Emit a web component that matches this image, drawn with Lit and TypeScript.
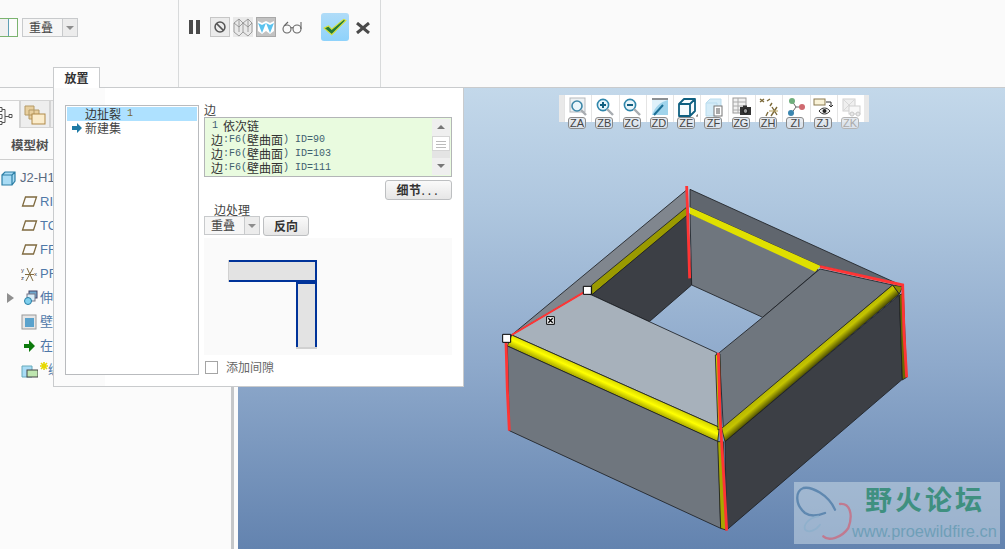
import { css, html, LitElement, svg, unsafeCSS } from "lit";
import { customElement } from "lit/decorators.js";

const CJK = unsafeCSS(`"Noto Sans CJK SC", "Liberation Sans", sans-serif`);

const viewIcons = [
  {
    label: "ZA",
    icon: svg`<rect x="2" y="1" width="15" height="14" fill="#eef2f4" stroke="#b5b9bd"/><circle cx="9" cy="9" r="5" fill="#eaf6fb" stroke="#3d87a8" stroke-width="1.6"/><path d="M13 13l5 5" stroke="#a8acb0" stroke-width="2.4"/>`,
  },
  {
    label: "ZB",
    icon: svg`<circle cx="8" cy="8" r="5.6" fill="#eaf6fb" stroke="#2f86ab" stroke-width="1.6"/><path d="M5 8h6M8 5v6" stroke="#135f80" stroke-width="2"/><path d="M12 12l6 6" stroke="#a8acb0" stroke-width="2.4"/>`,
  },
  {
    label: "ZC",
    icon: svg`<circle cx="8" cy="8" r="5.6" fill="#eaf6fb" stroke="#2f86ab" stroke-width="1.6"/><path d="M5 8h6" stroke="#135f80" stroke-width="2"/><path d="M12 12l6 6" stroke="#a8acb0" stroke-width="2.4"/>`,
  },
  {
    label: "ZD",
    icon: svg`<rect x="2" y="1" width="16" height="2" fill="#8b8f93"/><path d="M2 3h16v15H2z" fill="#dff1fa"/><path d="M2 18C5 10 10 5 18 3v15z" fill="#9fd4ec"/><path d="M4 18L13 8" stroke="#1c6f95" stroke-width="2"/>`,
  },
  {
    label: "ZE",
    icon: svg`<path d="M2 7h11v12H2zM2 7l5-5h11v12l-5 5M13 7l5-5" fill="#f7fbfd" stroke="#0f5f80" stroke-width="1.8" stroke-linejoin="round"/><path d="M21 17v2h-2" stroke="#555" fill="none"/>`,
  },
  {
    label: "ZF",
    icon: svg`<path d="M2 6h11v13H2zM2 6l4-4h11v10" fill="#d4ecf8" stroke="#b9dcee"/><rect x="10" y="9" width="8" height="10" fill="#fff" stroke="#777"/><path d="M12 12h4M12 14h4M12 16h4" stroke="#555"/>`,
  },
  {
    label: "ZG",
    icon: svg`<rect x="2" y="1" width="13" height="15" fill="#f1f1f1" stroke="#999"/><path d="M2 5h13M2 9h13M2 13h13M7 1v15" stroke="#aaa"/><rect x="9" y="10" width="11" height="8" fill="#333"/><rect x="12" y="8.5" width="4" height="2" fill="#333"/><circle cx="14.5" cy="14" r="2.4" fill="#999" stroke="#111"/>`,
  },
  {
    label: "ZH",
    icon: svg`<path d="M1 2l4 3M5 2L1 5M8 4l3-2M13 10l5 8M18 10l-6 9M7 19l2-4M13 6l-2 3" stroke="#7c6a3a" stroke-width="1.4" fill="none"/><path d="M10 14h9" stroke="#b7a05a"/>`,
  },
  {
    label: "ZI",
    icon: svg`<path d="M6 4l4 6 6 0M10 10l-5 7" stroke="#666" fill="none"/><circle cx="6" cy="4" r="3" fill="#6fae7d"/><circle cx="16" cy="10" r="3" fill="#cf6a70"/><circle cx="5" cy="16" r="3" fill="#3b86b0"/>`,
  },
  {
    label: "ZJ",
    icon: svg`<rect x="1" y="2" width="11" height="6" fill="#faf3d8" stroke="#8a7a50"/><path d="M13 5h5v5M16 8l2 2 2-2" stroke="#333" fill="none"/><path d="M6 14c3-4 8-4 11 0-3 4-8 4-11 0z" fill="#eee" stroke="#333"/><circle cx="11.5" cy="14" r="2" fill="#222"/>`,
  },
  {
    label: "ZK",
    icon: svg`<g opacity=".45"><rect x="2" y="2" width="12" height="12" fill="#ddd" stroke="#999"/><path d="M3 3l10 10M13 3L3 13" stroke="#aaa"/><rect x="8" y="9" width="11" height="8" fill="#eee" stroke="#999"/><circle cx="11" cy="17" r="2" fill="#ccc" stroke="#888"/><circle cx="17" cy="17" r="2" fill="#ccc" stroke="#888"/></g>`,
    dim: true,
  },
];

const plane = svg`<path d="M4.5 3h11l-3 9h-11z" fill="none" stroke="#7f6a3f" stroke-width="1.3"/>`;

const treeRows = [
  { text: "J2-H1", left: 1, icon: svg`<path d="M1 5h10v10H1zM1 5l3-3h10v9l-3 4M11 5l3-3" fill="#a9dcf5" stroke="#2d7fa6" stroke-width="1.2"/>`, dark: true },
  { text: "RIGHT", left: 21, icon: plane },
  { text: "TOP", left: 21, icon: plane },
  { text: "FRONT", left: 21, icon: plane },
  {
    text: "PRT_CSYS_DEF",
    left: 21,
    icon: svg`<path d="M5 15L12 2M6 2l6 13M4 8.5h9" stroke="#7f6a3f" fill="none"/><text x="0" y="6" font-size="6" fill="#444">y</text><text x="0" y="14" font-size="6" fill="#444">z</text><text x="13" y="10" font-size="6" fill="#444">x</text>`,
  },
  { text: "伸出项", left: 21, icon: svg`<rect x="8" y="1" width="8" height="7" fill="#6fa8cf" stroke="#446"/><rect x="6" y="4" width="8" height="7" fill="#d7edf8" stroke="#778"/><circle cx="7" cy="11" r="3.5" fill="#7fd0ee" stroke="#2a7fa5"/>`, caret: true },
  { text: "壁", left: 21, icon: svg`<rect x="1" y="1" width="14" height="14" fill="#e6e6e6" stroke="#9a9a9a"/><rect x="4" y="4" width="9" height="9" fill="#5aa2cc"/>` },
  { text: "在此插入", left: 21, icon: svg`<path d="M3 6h5V2l6 6-6 6v-4H3z" fill="#0c7a0c"/>` },
  { text: "编辑", left: 21, icon: svg`<path d="M1 4h10v11H1z" fill="#a9dcf5" stroke="#6ab"/><rect x="6" y="8" width="11" height="7" fill="#bfe6b0" stroke="#444"/>`, star: true },
];

const chainLines = ["90", "103", "111"];

@customElement("app-root")
class AppRoot extends LitElement {
  static override styles = css`
    :host {
      display: block;
      width: 1005px;
      height: 549px;
      position: relative;
      overflow: hidden;
      background: #fbfbfb;
      font-family: ${CJK};
      font-size: 12px;
      line-height: 14px;
      color: #333;
    }
    .ascii {
      font-family: "Liberation Mono", monospace;
      font-size: 10px;
      color: #3f5f70;
    }

    /* ribbon */
    .ribbon {
      display: flex;
      height: 87px;
      box-sizing: content-box;
      border-bottom: 1px solid #c9cbcd;
      background: #fafafa;
    }
    .group {
      border-right: 1px solid #d8dadb;
      display: flex;
      align-items: flex-start;
      padding-top: 13px;
      box-sizing: border-box;
    }
    .group.first {
      width: 179px;
      padding-top: 18px;
      gap: 4px;
    }
    .group.second {
      width: 202px;
      padding-left: 10px;
    }
    .stub {
      width: 17px;
      height: 17px;
      border: 1px solid #7bb36f;
      border-left: none;
      background: linear-gradient(90deg, #f0f0f0 8px, #5f9fb5 8px, #5f9fb5 9px, #fbfbfb 9px);
    }
    .combo {
      display: flex;
      box-sizing: border-box;
      height: 19px;
      border: 1px solid #c8cacc;
      background: #f6f6f6;
      color: #444;
    }
    .combo span {
      flex: 1;
      padding-left: 6px;
      line-height: 16px;
    }
    .combo i {
      width: 14px;
      border-left: 1px solid #c8cacc;
      background: #ececec;
      position: relative;
    }
    .combo i::after {
      content: "";
      position: absolute;
      left: 3px;
      top: 7px;
      border: 4px solid transparent;
      border-top: 4px solid #8d8d8d;
      border-bottom: none;
    }
    .ribbon .combo {
      width: 56px;
    }
    .pause {
      display: flex;
      gap: 3px;
      margin: 7px 10px 0 0;
    }
    .pause b {
      width: 4px;
      height: 14px;
      background: #4a4a4a;
    }
    .tool {
      width: 20px;
      height: 20px;
      margin: 4px 3px 0 0;
      box-sizing: border-box;
      display: block;
    }
    .tool.ban {
      border: 1px solid #c6c6c6;
      background: #ebebeb;
    }
    .tool.pressed {
      background: #c2c2c2;
      border: 1px solid #a8a8a8;
    }
    .glasses {
      width: 20px;
      height: 14px;
      margin: 7px 19px 0 3px;
    }
    .ok {
      width: 28px;
      height: 28px;
      border-radius: 3px;
      background: linear-gradient(#b0dcf8, #8ed2fb);
      display: grid;
      place-items: center;
    }
    .cancel {
      width: 14px;
      height: 12px;
      margin: 9px 0 0 7px;
    }

    /* lower area */
    .main {
      display: flex;
      height: 461px;
    }
    .tree-panel {
      width: 231px;
      flex: none;
      padding-top: 12px;
      box-sizing: border-box;
      background: #fbfbfb;
    }
    .splitter {
      width: 3px;
      flex: none;
      background: #c5c7c9;
      margin-right: 4px;
    }
    .tabs {
      display: flex;
      height: 28px;
      align-items: stretch;
    }
    .tab {
      box-sizing: border-box;
      display: grid;
      place-items: center;
      border: 1px solid #d4d4d4;
    }
    .tab.on {
      width: 20px;
      background: #fbfbfb;
      border-width: 1px 1px 0 0;
    }
    .tab.off {
      width: 30px;
      background: #eeeeee;
      border-bottom: 1px solid #d4d4d4;
    }
    .tree-title {
      height: 31px;
      line-height: 33px;
      padding-left: 11px;
      font-weight: 700;
      font-size: 12.5px;
      color: #505050;
      border-bottom: 1px solid #cfcfcf;
    }
    .tree-list {
      padding-top: 6px;
    }
    .row {
      display: flex;
      align-items: center;
      height: 24px;
      position: relative;
      color: #4f78a8;
      font-family: "Liberation Sans", ${CJK};
      font-size: 13px;
      white-space: nowrap;
    }
    .row.dark {
      color: #5a6a80;
    }
    .row svg {
      width: 17px;
      height: 16px;
      flex: none;
      margin-right: 2px;
    }
    .row svg.star {
      width: 8px;
      height: 8px;
      margin: -8px 0 0 0;
    }
    .caret {
      position: absolute;
      left: 7px;
      top: 7px;
      border: 5px solid transparent;
      border-left: 7px solid #8f8f8f;
      border-right: none;
    }

    /* graphics window */
    .viewport {
      flex: 1;
      position: relative;
      overflow: hidden;
      background: linear-gradient(#c3d8ea 0%, #afc7df 25%, #8ea9cb 60%, #6383af 100%);
    }
    .model {
      position: absolute;
      inset: 0;
      width: 100%;
      height: 100%;
    }
    .view-bar {
      position: absolute;
      left: 321px;
      top: 7px;
      display: flex;
      height: 27px;
      padding: 0 5px 0 5px;
      background: #e9e9e9;
    }
    .view-item {
      width: 27.3px;
      background: #fff;
      border-left: 1px solid #e4e4e4;
      box-sizing: border-box;
      position: relative;
      display: flex;
      justify-content: center;
      padding-top: 2px;
    }
    .view-item svg {
      width: 21px;
      height: 21px;
    }
    .chip {
      position: absolute;
      left: 3px;
      top: 22px;
      width: 18px;
      height: 12px;
      box-sizing: border-box;
      border: 1px solid #8b8b8b;
      border-radius: 3px;
      background: rgba(226, 230, 236, 0.85);
      color: #444;
      font: 11px/10px "Liberation Sans", sans-serif;
      text-align: center;
    }
    .chip.dim {
      color: #aaa;
      border-color: #b5b5b5;
    }
    .watermark {
      position: absolute;
      left: 556px;
      top: 394px;
      width: 206px;
      height: 62px;
      background: rgba(205, 220, 232, 0.52);
      display: flex;
    }
    .watermark svg {
      width: 60px;
      height: 62px;
      flex: none;
    }
    .wm-text {
      display: flex;
      flex-direction: column;
      white-space: nowrap;
    }
    .wm-title {
      font-weight: 700;
      font-size: 27px;
      line-height: 30px;
      letter-spacing: 3px;
      color: #3f9080;
      padding: 2px 0 0 11px;
    }
    .wm-url {
      font: 16.4px/18px "Liberation Sans", sans-serif;
      color: #6f9fb8;
      margin-top: 8px;
      margin-left: -2px;
    }

    /* placement panel, floats over tree and window */
    .panel {
      position: absolute;
      left: 53px;
      top: 67px;
    }
    .panel-tab {
      width: 47px;
      height: 21px;
      box-sizing: border-box;
      border: 1px solid #c9cbcd;
      border-bottom: none;
      background: #fff;
      text-align: center;
      font-weight: 700;
      line-height: 20px;
      color: #333;
    }
    .panel-body {
      width: 411px;
      height: 299px;
      box-sizing: border-box;
      border: 1px solid #c9cbcd;
      border-top: none;
      background: linear-gradient(90deg, #fbfbfb 51px, #fff 51px);
      padding: 17px 11px 0 11px;
      display: flex;
      gap: 5px;
    }
    .sets {
      width: 134px;
      height: 270px;
      box-sizing: border-box;
      border: 1px solid #b9bbbe;
      background: #fff;
      padding: 1px;
    }
    .set {
      height: 14px;
      padding-left: 18px;
      display: flex;
      align-items: center;
      color: #444;
      position: relative;
    }
    .set.sel {
      background: #aee1ff;
      color: #333;
    }
    .set .ascii {
      margin-left: 6px;
      color: #7a6a30;
    }
    .set svg {
      position: absolute;
      left: 5px;
      top: 2px;
      width: 10px;
      height: 10px;
    }
    .detail {
      width: 248px;
      margin-top: -2px;
    }
    .lab {
      height: 14px;
      color: #444;
    }
    .chain {
      height: 60px;
      box-sizing: border-box;
      border: 1px solid #b3b5b7;
      background: #e9fbdf;
      padding-left: 6px;
      display: flex;
      justify-content: space-between;
      color: #333;
      white-space: nowrap;
    }
    .chain-text {
      padding-top: 1px;
    }
    .chain-text div {
      height: 14px;
      display: flex;
      align-items: center;
    }
    .chain-text .first .ascii {
      width: 12px;
      padding-left: 1px;
      box-sizing: border-box;
    }
    .chain-text .space {
      white-space: pre;
    }
    .scroll {
      width: 18px;
      margin: 1px 1px 1px 0;
      display: flex;
      flex-direction: column;
      background: #e4e4e4;
    }
    .scroll i {
      height: 17px;
      background: #efefef;
      position: relative;
      display: block;
    }
    .scroll i::after {
      content: "";
      position: absolute;
      left: 5px;
      top: 6px;
      border: 4px solid transparent;
      border-bottom: 4px solid #777;
      border-top: none;
    }
    .scroll i.down::after {
      border: 4px solid transparent;
      border-top: 4px solid #777;
      border-bottom: none;
    }
    .scroll .thumb {
      height: 15px;
      background: repeating-linear-gradient(#fff 0 2px, #bbb 2px 3px) center / 10px 10px no-repeat #fff;
      border: 1px solid #d5d5d5;
      box-sizing: border-box;
    }
    .scroll .gap {
      flex: 1;
    }
    .btn {
      box-sizing: border-box;
      border: 1px solid #bdbfc1;
      border-radius: 3px;
      background: linear-gradient(#fafafa, #e6e6e6);
      font-weight: 700;
      color: #333;
      text-align: center;
    }
    .detail-btn {
      width: 67px;
      height: 20px;
      line-height: 18px;
      margin: 3px 0 3px auto;
      letter-spacing: 0.5px;
    }
    .detail-btn span {
      letter-spacing: 3px;
      font-weight: 400;
    }
    .lab.sub {
      padding-left: 10px;
      margin-bottom: -1px;
    }
    .edge-row {
      display: flex;
      gap: 3px;
    }
    .edge-row .combo {
      width: 56px;
    }
    .rev-btn {
      width: 46px;
      height: 20px;
      line-height: 18px;
    }
    .preview {
      margin-top: 2px;
      height: 117px;
      background: #fafafa;
      padding: 22px 0 0 24px;
      box-sizing: border-box;
    }
    .preview svg {
      display: block;
      width: 92px;
      height: 90px;
    }
    .gap-row {
      display: flex;
      align-items: center;
      gap: 8px;
      margin: 5px 0 0 1px;
      color: #666;
    }
    .gap-row b {
      width: 13px;
      height: 13px;
      box-sizing: border-box;
      border: 1px solid #a5a5a5;
      background: #fff;
    }
  `;

  private renderRibbon() {
    return html`
      <div class="ribbon">
        <div class="group first">
          <div class="stub"></div>
          <div class="combo"><span>重叠</span><i></i></div>
        </div>
        <div class="group second">
          <div class="pause"><b></b><b></b></div>
          <svg class="tool ban" viewBox="0 0 20 20">
            <circle cx="10" cy="10" r="5.5" fill="none" stroke="#555" stroke-width="1.7" />
            <path d="M6 6l8 8" stroke="#555" stroke-width="1.7" />
          </svg>
          <svg class="tool" viewBox="0 0 20 20">
            <rect width="20" height="20" fill="#e9e9e9" />
            <path d="M1 6l5-4 4 4 5-4 4 4v9l-4 4-5-4-4 4-5-4zM6 2v13M10 6v9M15 2v13M1 6l5 4 4-4 5 4 4-4" fill="none" stroke="#8a8a8a" stroke-width=".8" />
          </svg>
          <svg class="tool pressed" viewBox="0 0 18 18">
            <path d="M1 3l4 2 4-2 4 2 4-2v10l-4 3-4-3-4 3-4-3z" fill="#fff" />
            <path d="M1 5l4 10 4-10-4 2zM9 5l4 10 4-10-4 2z" fill="#5cc3ee" />
          </svg>
          <svg class="glasses" viewBox="0 0 20 14">
            <circle cx="5" cy="9" r="4" fill="none" stroke="#666" stroke-width="1.1" />
            <circle cx="15" cy="9" r="4" fill="none" stroke="#666" stroke-width="1.1" />
            <path d="M9 8c.7-.6 1.3-.6 2 0M2 6l4-4M19 9V2" fill="none" stroke="#666" stroke-width="1.1" />
          </svg>
          <div class="ok">
            <svg width="24" height="20" viewBox="0 0 22 18">
              <path d="M1 10l4-2 3 3L19 2l2 1L8 16z" fill="#217a3c" stroke="#d8e23a" stroke-width="1" />
            </svg>
          </div>
          <svg class="cancel" viewBox="0 0 14 12">
            <path d="M1 1l12 10M13 1L1 11" stroke="#4a4a4a" stroke-width="3" />
          </svg>
        </div>
      </div>
    `;
  }

  private renderTree() {
    return html`
      <div class="tree-panel">
        <div class="tabs">
          <div class="tab on">
            <svg width="19" height="20" viewBox="0 0 19 20">
              <path d="M-1 2.5h3v4H-1zM-1 9.5h3v4H-1zM-1 16.5h3v3H-1zM2 4.5h3v13H2M5 11.5h4M9 9.5h3v3H9z" fill="none" stroke="#555" />
            </svg>
          </div>
          <div class="tab off">
            <svg width="22" height="22" viewBox="0 0 22 22">
              <path d="M1 3h9v9H1zM5 7h10v9H5z" fill="#e8cf9e" stroke="#b49a66" />
              <rect x="8" y="11" width="13" height="10" fill="#fbeccb" stroke="#b08a48" />
            </svg>
          </div>
          <div class="tab off"></div>
        </div>
        <div class="tree-title">模型树</div>
        <div class="tree-list">
          ${treeRows.map(
            (r) => html`
              <div class="row ${r.dark ? "dark" : ""}" style="padding-left:${r.left}px">
                ${r.caret ? html`<span class="caret"></span>` : null}
                <svg viewBox="0 0 17 16">${r.icon}</svg>
                ${r.star
                  ? html`<svg class="star" viewBox="0 0 8 8">
                      <path d="M4 0v8M0 4h8M1 1l6 6M7 1L1 7" stroke="#e6d800" stroke-width="1.6" />
                    </svg>`
                  : null}
                ${r.text}
              </div>
            `,
          )}
        </div>
      </div>
      <div class="splitter"></div>
    `;
  }

  private renderModel() {
    return html`
      <svg class="model" viewBox="238 88 767 461">
        <defs>
          <!-- gradients run across the strips, in the group's scaled coordinates -->
          <linearGradient id="front" gradientUnits="userSpaceOnUse" x1="376" y1="633" x2="360" y2="668">
            <stop offset="0" stop-color="#d8d800" />
            <stop offset="0.45" stop-color="#ffff00" />
            <stop offset="1" stop-color="#a4a400" />
          </linearGradient>
          <linearGradient id="side" gradientUnits="userSpaceOnUse" x1="951" y1="560" x2="974" y2="587">
            <stop offset="0" stop-color="#b8b800" />
            <stop offset="0.4" stop-color="#c4c400" />
            <stop offset="1" stop-color="#4e4e00" />
          </linearGradient>
        </defs>
        <g transform="translate(490 170) scale(0.33333)" stroke="#1c1e22" stroke-width="2.5" stroke-linejoin="round">
          <path d="M65 495L592 58V112L305 372L280 368Z" fill="#80868e" />
          <path d="M305 345L592 110V138L305 375Z" fill="#9a9a00" />
          <path d="M305 375L592 135L605 345L478 455Z" fill="#3c3f45" />
          <path d="M600 130L985 300L818 442L605 345Z" fill="#6f767e" />
          <path d="M600 58L1225 342L990 288L600 112Z" fill="#60666e" />
          <path d="M600 112L992 288L975 305L600 132Z" fill="#e0e000" stroke="none" />
          <path d="M990 297L1208 345L700 775L688 548L818 442Z" fill="#6f767e" />
          <path d="M65 495L280 368L305 375L478 455L680 548L688 772Z" fill="#a7b1bb" />
          <path d="M65 495L688 772L683 815L52 528Z" fill="url(#front)" />
          <path d="M52 528L685 815L692 1075L58 782Z" fill="#6f767e" />
          <path d="M705 815L1228 375L1237 628L710 1080Z" fill="#3c3f45" />
          <path d="M695 775L1208 345L1228 372L705 815Z" fill="url(#side)" />
          <path d="M683 815L700 815L708 1080L692 1075Z" fill="#a8a800" />
          <path d="M676 555L690 552L694 775L684 780Z" fill="#c8c800" />
          <path d="M1228 375L1240 370L1250 622L1237 630Z" fill="#6a6a00" />
          <path d="M1208 345L1238 350L1228 372Z" fill="#8d8d00" />
          <g fill="none" stroke="#ff3535" stroke-width="8.5" stroke-linejoin="miter">
            <path d="M590 48L593 130L599 325" />
            <path d="M990 290L1238 345L1242 490L1250 622" />
            <path d="M685 548L690 740L700 900L710 1082" />
            <path d="M48 515L52 660L58 782" />
            <path d="M65 495L280 368" stroke-width="6" />
          </g>
          <g fill="#fff" stroke="#000" stroke-width="3">
            <rect x="280" y="349" width="24" height="24" />
            <rect x="38" y="493" width="24" height="24" />
            <rect x="170" y="440" width="23" height="23" />
          </g>
          <path d="M175 445l13 13M188 445l-13 13" stroke="#000" stroke-width="4" />
        </g>
      </svg>
    `;
  }

  private renderViewport() {
    return html`
      <div class="viewport">
        ${this.renderModel()}
        <div class="view-bar">
          ${viewIcons.map(
            (v) => html`
              <div class="view-item">
                <svg viewBox="0 0 21 21">${v.icon}</svg>
                <span class="chip ${v.dim ? "dim" : ""}">${v.label}</span>
              </div>
            `,
          )}
        </div>
        <div class="watermark">
          <svg viewBox="0 0 60 62">
            <g transform="scale(0.33333) translate(-27 -22)" fill="none" stroke-linecap="round">
              <path d="M150 105C130 60 80 35 55 40C30 50 30 90 60 115C75 125 95 125 120 115" stroke="#5f88b0" stroke-width="7" />
              <path d="M165 88C195 85 205 120 190 160C170 190 130 200 115 185" stroke="#c07a90" stroke-width="7" />
              <path d="M100 125C70 130 55 150 60 165C70 175 90 170 105 150" stroke="#8fb0cc" stroke-width="5" />
            </g>
          </svg>
          <div class="wm-text">
            <div class="wm-title">野火论坛</div>
            <div class="wm-url">www.proewildfire.cn</div>
          </div>
        </div>
      </div>
    `;
  }

  private renderPanel() {
    return html`
      <div class="panel">
        <div class="panel-tab">放置</div>
        <div class="panel-body">
          <div class="sets">
            <div class="set sel">边扯裂<span class="ascii">1</span></div>
            <div class="set">
              <svg viewBox="0 0 10 10"><path d="M0 3h5V0l5 5-5 5V7H0z" fill="#1d7aa5" /></svg>新建集
            </div>
          </div>
          <div class="detail">
            <div class="lab">边</div>
            <div class="chain">
              <div class="chain-text">
                <div class="first"><span class="ascii">1</span>依次链</div>
                ${chainLines.map(
                  (id) =>
                    html`<div>
                      边<span class="ascii">:F6(</span>壁曲面<span class="ascii space">) ID=${id}</span>
                    </div>`,
                )}
              </div>
              <div class="scroll">
                <i></i>
                <div class="thumb"></div>
                <div class="gap"></div>
                <i class="down"></i>
              </div>
            </div>
            <div class="btn detail-btn">细节<span>...</span></div>
            <div class="lab sub">边处理</div>
            <div class="edge-row">
              <div class="combo"><span>重叠</span><i></i></div>
              <div class="btn rev-btn">反向</div>
            </div>
            <div class="preview">
              <svg viewBox="0 0 92 90">
                <path d="M1 1H88V21H1Z" fill="#e3e3e3" />
                <path d="M69 21H88V87H69Z" fill="#e3e3e3" />
                <path d="M1 1H88V87M1 21H87M69 21V87M69 23H88" fill="none" stroke="#003399" stroke-width="2" />
                <path d="M0 0V22M68 88H89" stroke="#a8a8a8" />
              </svg>
            </div>
            <div class="gap-row"><b></b>添加间隙</div>
          </div>
        </div>
      </div>
    `;
  }

  override render() {
    return html`
      ${this.renderRibbon()}
      <div class="main">${this.renderTree()} ${this.renderViewport()}</div>
      ${this.renderPanel()}
    `;
  }
}

declare global {
  interface HTMLElementTagNameMap {
    "app-root": AppRoot;
  }
}
